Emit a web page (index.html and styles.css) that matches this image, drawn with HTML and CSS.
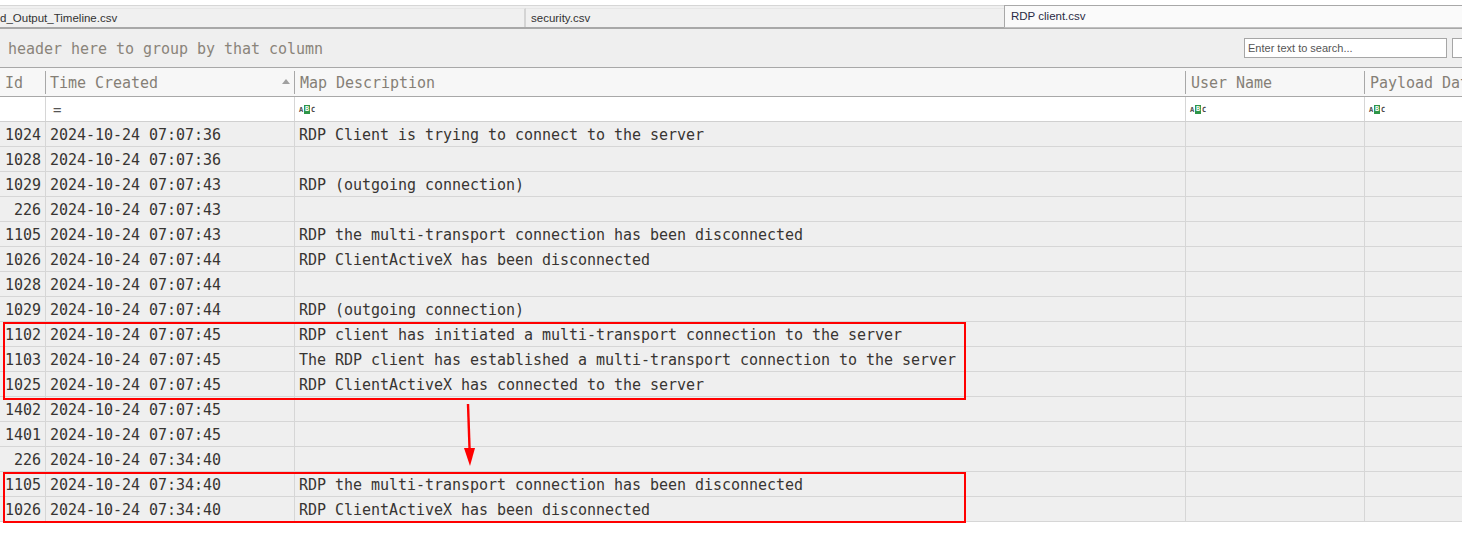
FILE: index.html
```html
<!DOCTYPE html>
<html>
<head>
<meta charset="utf-8">
<link rel="stylesheet" href="styles.css">
</head>
<body>
<div class="app">
  <div class="tabstrip">
    <div class="tab tab-first">d_Output_Timeline.csv</div>
    <div class="tab tab-mid">security.csv</div>
    <div class="tab tab-active">RDP client.csv</div>
  </div>
  <div class="grouppanel">
    <span class="grouptext">header here to group by that column</span>
    <div class="search">Enter text to search...</div>
    <div class="search-btn"></div>
  </div>
  <div class="grid">
    <div class="row head">
      <div class="cell">Id</div>
      <div class="cell sorted">Time Created<span class="sortarrow"></span></div>
      <div class="cell">Map Description</div>
      <div class="cell">User Name</div>
      <div class="cell last">Payload Data1</div>
    </div>
    <div class="row filter">
      <div class="cell"></div>
      <div class="cell"><span class="eq">=</span></div>
      <div class="cell"><span class="abc"><i>A</i><b>B</b><i>C</i></span></div>
      <div class="cell"><span class="abc"><i>A</i><b>B</b><i>C</i></span></div>
      <div class="cell last"><span class="abc"><i>A</i><b>B</b><i>C</i></span></div>
    </div>
    <div class="row"><div class="cell id">1024</div><div class="cell">2024-10-24 07:07:36</div><div class="cell">RDP Client is trying to connect to the server</div><div class="cell"></div><div class="cell last"></div></div>
    <div class="row"><div class="cell id">1028</div><div class="cell">2024-10-24 07:07:36</div><div class="cell"></div><div class="cell"></div><div class="cell last"></div></div>
    <div class="row"><div class="cell id">1029</div><div class="cell">2024-10-24 07:07:43</div><div class="cell">RDP (outgoing connection)</div><div class="cell"></div><div class="cell last"></div></div>
    <div class="row"><div class="cell id">226</div><div class="cell">2024-10-24 07:07:43</div><div class="cell"></div><div class="cell"></div><div class="cell last"></div></div>
    <div class="row"><div class="cell id">1105</div><div class="cell">2024-10-24 07:07:43</div><div class="cell">RDP the multi-transport connection has been disconnected</div><div class="cell"></div><div class="cell last"></div></div>
    <div class="row"><div class="cell id">1026</div><div class="cell">2024-10-24 07:07:44</div><div class="cell">RDP ClientActiveX has been disconnected</div><div class="cell"></div><div class="cell last"></div></div>
    <div class="row"><div class="cell id">1028</div><div class="cell">2024-10-24 07:07:44</div><div class="cell"></div><div class="cell"></div><div class="cell last"></div></div>
    <div class="row"><div class="cell id">1029</div><div class="cell">2024-10-24 07:07:44</div><div class="cell">RDP (outgoing connection)</div><div class="cell"></div><div class="cell last"></div></div>
    <div class="row"><div class="cell id">1102</div><div class="cell">2024-10-24 07:07:45</div><div class="cell">RDP client has initiated a multi-transport connection to the server</div><div class="cell"></div><div class="cell last"></div></div>
    <div class="row"><div class="cell id">1103</div><div class="cell">2024-10-24 07:07:45</div><div class="cell">The RDP client has established a multi-transport connection to the server</div><div class="cell"></div><div class="cell last"></div></div>
    <div class="row"><div class="cell id">1025</div><div class="cell">2024-10-24 07:07:45</div><div class="cell">RDP ClientActiveX has connected to the server</div><div class="cell"></div><div class="cell last"></div></div>
    <div class="row"><div class="cell id">1402</div><div class="cell">2024-10-24 07:07:45</div><div class="cell"></div><div class="cell"></div><div class="cell last"></div></div>
    <div class="row"><div class="cell id">1401</div><div class="cell">2024-10-24 07:07:45</div><div class="cell"></div><div class="cell"></div><div class="cell last"></div></div>
    <div class="row"><div class="cell id">226</div><div class="cell">2024-10-24 07:34:40</div><div class="cell"></div><div class="cell"></div><div class="cell last"></div></div>
    <div class="row"><div class="cell id">1105</div><div class="cell">2024-10-24 07:34:40</div><div class="cell">RDP the multi-transport connection has been disconnected</div><div class="cell"></div><div class="cell last"></div></div>
    <div class="row"><div class="cell id">1026</div><div class="cell">2024-10-24 07:34:40</div><div class="cell">RDP ClientActiveX has been disconnected</div><div class="cell"></div><div class="cell last"></div></div>
  </div>
  <div class="mark mark-1"></div>
  <div class="mark mark-2"></div>
  <svg class="arrow" width="20" height="66" viewBox="0 0 20 66">
    <line x1="8" y1="0" x2="9.6" y2="46" stroke="#ff0000" stroke-width="2.4"/>
    <polygon points="4,44 15,44 10,62" fill="#ff0000"/>
  </svg>
</div>
</body>
</html>
```
FILE: styles.css
```css
html, body {
  margin: 0;
  padding: 0;
  background: #ffffff;
  overflow: hidden;
}
.app {
  position: relative;
  width: 1462px;
  height: 538px;
  overflow: hidden;
  background: #ffffff;
}
.tabstrip {
  display: flex;
  height: 21px;
  background: #f0f0f0;
  border-top: 1px solid #d6d6d6;
  margin-top: 5px;
  border-bottom: 2px solid #a8a8a8;
  box-sizing: content-box;
  font-family: "Liberation Sans", "DejaVu Sans", sans-serif;
  font-size: 11.5px;
  color: #333;
}
.tab {
  box-sizing: border-box;
  height: 19px;
  margin-top: 2px;
  border-top: 1px solid #e6e6e6;
  display: flex;
  align-items: center;
  padding-left: 5px;
}
.tab-first {
  width: 526px;
  padding-left: 0;
  border-right: 2px solid #d4d4d4;
}
.tab-mid {
  width: 478px;
}
.tab-active {
  flex: 1;
  margin-top: -1px;
  height: 23px;
  margin-bottom: -2px;
  background: #fafafa;
  border: 1px solid #a8a8a8;
  border-right: none;
  border-bottom: 1px solid #c0c0c0;
  padding-left: 6px;
  padding-bottom: 1px;
  color: #2a2a44;
}
.grouppanel {
  display: flex;
  align-items: flex-start;
  height: 38px;
  background: #efefef;
  border-bottom: 1px solid #a8a8a8;
  padding-left: 8px;
}
.grouptext {
  margin-top: 11px;
  line-height: 18px;
  font-family: "DejaVu Sans Mono", "Liberation Mono", monospace;
  font-size: 15px;
  color: #8a847a;
  letter-spacing: -0.03px;
}
.search {
  margin-left: auto;
  margin-top: 9px;
  box-sizing: border-box;
  width: 203px;
  height: 20px;
  background: #fff;
  border: 1px solid #a6a6a6;
  font-family: "Liberation Sans", "DejaVu Sans", sans-serif;
  font-size: 11px;
  color: #555;
  padding-left: 3px;
  line-height: 18px;
}
.search-btn {
  box-sizing: border-box;
  width: 10px;
  height: 20px;
  margin-left: 5px;
  margin-top: 9px;
  background: #fff;
  border: 1px solid #a6a6a6;
  border-right: none;
}
.grid {
  font-family: "DejaVu Sans Mono", "Liberation Mono", monospace;
  font-size: 15px;
  letter-spacing: -0.03px;
  color: #383532;
}
.row {
  display: grid;
  grid-template-columns: 46px 249px 891px 179px 1fr;
  height: 25px;
  box-sizing: border-box;
  background: #efefef;
  border-bottom: 1px solid #d6d6d6;
}
.cell {
  box-sizing: border-box;
  border-right: 1px solid #d6d6d6;
  padding-left: 4px;
  line-height: 26px;
  white-space: nowrap;
  overflow: hidden;
}
.cell.last {
  border-right: none;
}
.cell.id {
  text-align: right;
  padding-left: 0;
  padding-right: 4px;
}
.row.head {
  height: 29px;
  background: #f7f7f7;
  border-bottom: 1px solid #a8a8a8;
  color: #857f76;
}
.row.head .cell {
  border-right: none;
  position: relative;
  line-height: 30px;
  padding-left: 5px;
}
.row.head .cell::after {
  content: "";
  position: absolute;
  right: 0;
  top: 3px;
  height: 23px;
  border-right: 1px solid #a8a8a8;
}
.row.head .cell.last::after {
  display: none;
}
.row.head .cell.sorted {
  padding-left: 4px;
}
.sortarrow {
  position: absolute;
  right: 5px;
  top: 11px;
  width: 0;
  height: 0;
  border-left: 4px solid transparent;
  border-right: 4px solid transparent;
  border-bottom: 5px solid #a0a0a0;
}
.row.filter {
  background: #ffffff;
  border-bottom: 1px solid #d0d0d0;
}
.eq {
  display: inline-block;
  margin-left: 3px;
  color: #555;
  font-size: 14px;
  line-height: 24px;
}
.abc {
  display: inline-flex;
  align-items: center;
  margin-top: 8px;
  vertical-align: top;
  font-family: "DejaVu Sans Mono", monospace;
  font-size: 7px;
  font-weight: bold;
  line-height: 8px;
  letter-spacing: 0;
}
.abc i {
  font-style: normal;
  color: #444;
  width: 4px;
  text-align: center;
}
.abc b {
  background: #2e9548;
  color: #fff;
  width: 6px;
  height: 9px;
  line-height: 9px;
  text-align: center;
  margin: 0 1px;
}
.mark {
  position: absolute;
  left: 3px;
  width: 963px;
  box-sizing: border-box;
  border: 2px solid #ff0000;
}
.mark-1 {
  top: 322px;
  height: 78px;
}
.mark-2 {
  top: 472px;
  height: 51px;
}
.arrow {
  position: absolute;
  left: 460px;
  top: 404px;
}
```
